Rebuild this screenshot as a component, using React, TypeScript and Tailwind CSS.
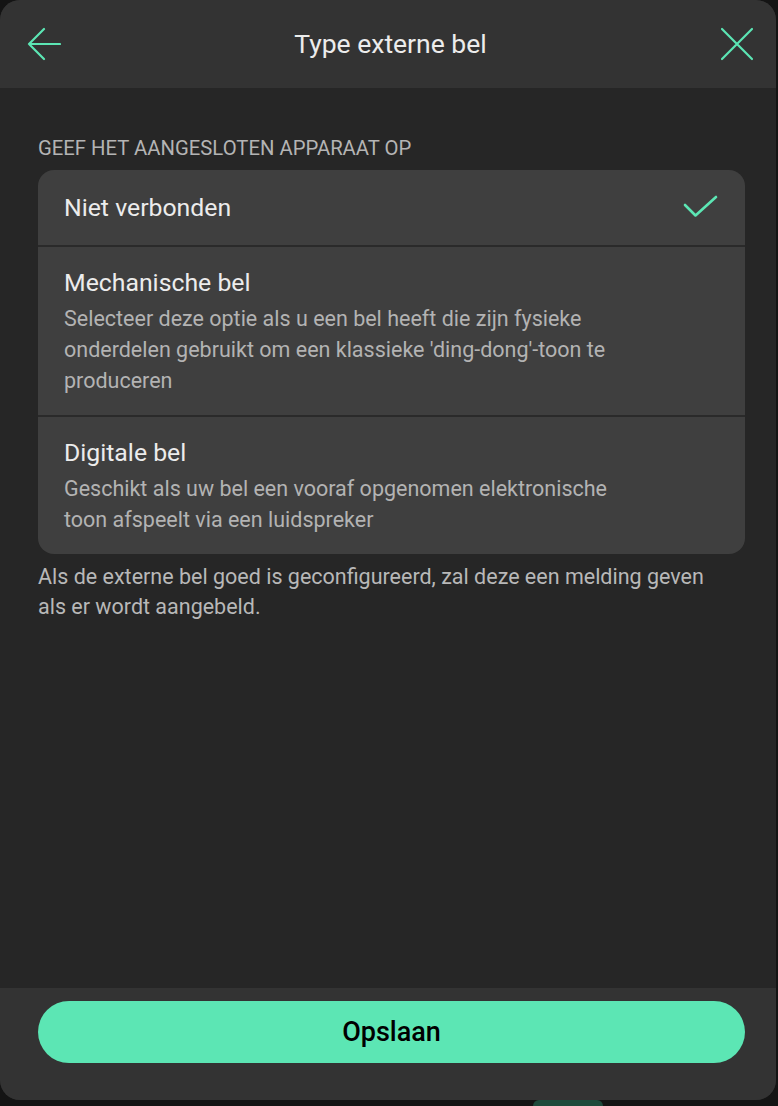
const options = [
  { title: 'Niet verbonden', desc: '', selected: true },
  {
    title: 'Mechanische bel',
    desc: "Selecteer deze optie als u een bel heeft die zijn fysieke onderdelen gebruikt om een klassieke 'ding-dong'-toon te produceren",
    selected: false,
  },
  {
    title: 'Digitale bel',
    desc: 'Geschikt als uw bel een vooraf opgenomen elektronische toon afspeelt via een luidspreker',
    selected: false,
  },
]

function Check() {
  return (
    <svg width="36" height="26" viewBox="0 0 36 26" fill="none" stroke="#5ce6b4" strokeWidth="2.6" strokeLinecap="round" strokeLinejoin="round">
      <path d="M2 10 L12.5 20.5 L33 2" />
    </svg>
  )
}

export default function App() {
  return (
    <div className="min-h-[1106px] w-[778px] bg-[#141414] font-['Roboto','Liberation_Sans',sans-serif]">
      <div className="flex h-[1100px] w-[776px] flex-col overflow-hidden rounded-[20px] bg-[#262626]">
        {/* header */}
        <div className="flex h-[88px] items-center bg-[#333333] pl-[27px] pr-[22px]">
          <svg width="34" height="34" viewBox="0 0 34 34" fill="none" stroke="#5ce6b4" strokeWidth="2.2" strokeLinecap="round" strokeLinejoin="round">
            <path d="M2 17 H33 M17 2 L2 17 L17 32" />
          </svg>
          <h1 className="flex-1 text-center text-[26.5px] text-[#ececec]">Type externe bel</h1>
          <svg width="34" height="34" viewBox="0 0 34 34" fill="none" stroke="#5ce6b4" strokeWidth="2.2" strokeLinecap="round">
            <path d="M2 2 L32 32 M32 2 L2 32" />
          </svg>
        </div>

        {/* body */}
        <div className="flex-1 pl-[38px] pr-[31px] pt-[48px]">
          <p className="mb-[10px] text-[20.3px] leading-[24px] uppercase text-[#b4b4b4]">Geef het aangesloten apparaat op</p>
          <div className="overflow-hidden rounded-[16px] bg-[#3f3f3f]">
            {options.map((o, i) => (
              <div key={o.title}>
                {i > 0 && <div className="h-[2px] bg-[#2a2a2a]" />}
                {o.desc ? (
                  <div className="px-[26px] pt-[22px] pb-[19px]">
                    <div className="text-[24.8px] leading-[28px] text-[#ececec]">{o.title}</div>
                    <div className="mt-[6px] max-w-[575px] text-[21.5px] leading-[31px] text-[#b3b3b3]">{o.desc}</div>
                  </div>
                ) : (
                  <div className="flex h-[75px] items-center justify-between pl-[26px] pr-[26px]">
                    <span className="text-[24.8px] text-[#ececec]">{o.title}</span>
                    {o.selected && <Check />}
                  </div>
                )}
              </div>
            ))}
          </div>
          <p className="mt-[8px] max-w-[690px] text-[21.5px] leading-[30px] text-[#b8b8b8]">
            Als de externe bel goed is geconfigureerd, zal deze een melding geven als er wordt aangebeld.
          </p>
        </div>

        {/* footer */}
        <div className="h-[112px] bg-[#333333] pl-[38px] pr-[31px] pt-[13px]">
          <button className="flex h-[62px] w-full items-center justify-center rounded-full bg-[#5ce6b4] text-[27px] font-medium text-black">
            Opslaan
          </button>
        </div>
      </div>
      <div className="ml-[533px] h-[6px] w-[70px] rounded-t-full bg-[#1e4a3b]" />
    </div>
  )
}
